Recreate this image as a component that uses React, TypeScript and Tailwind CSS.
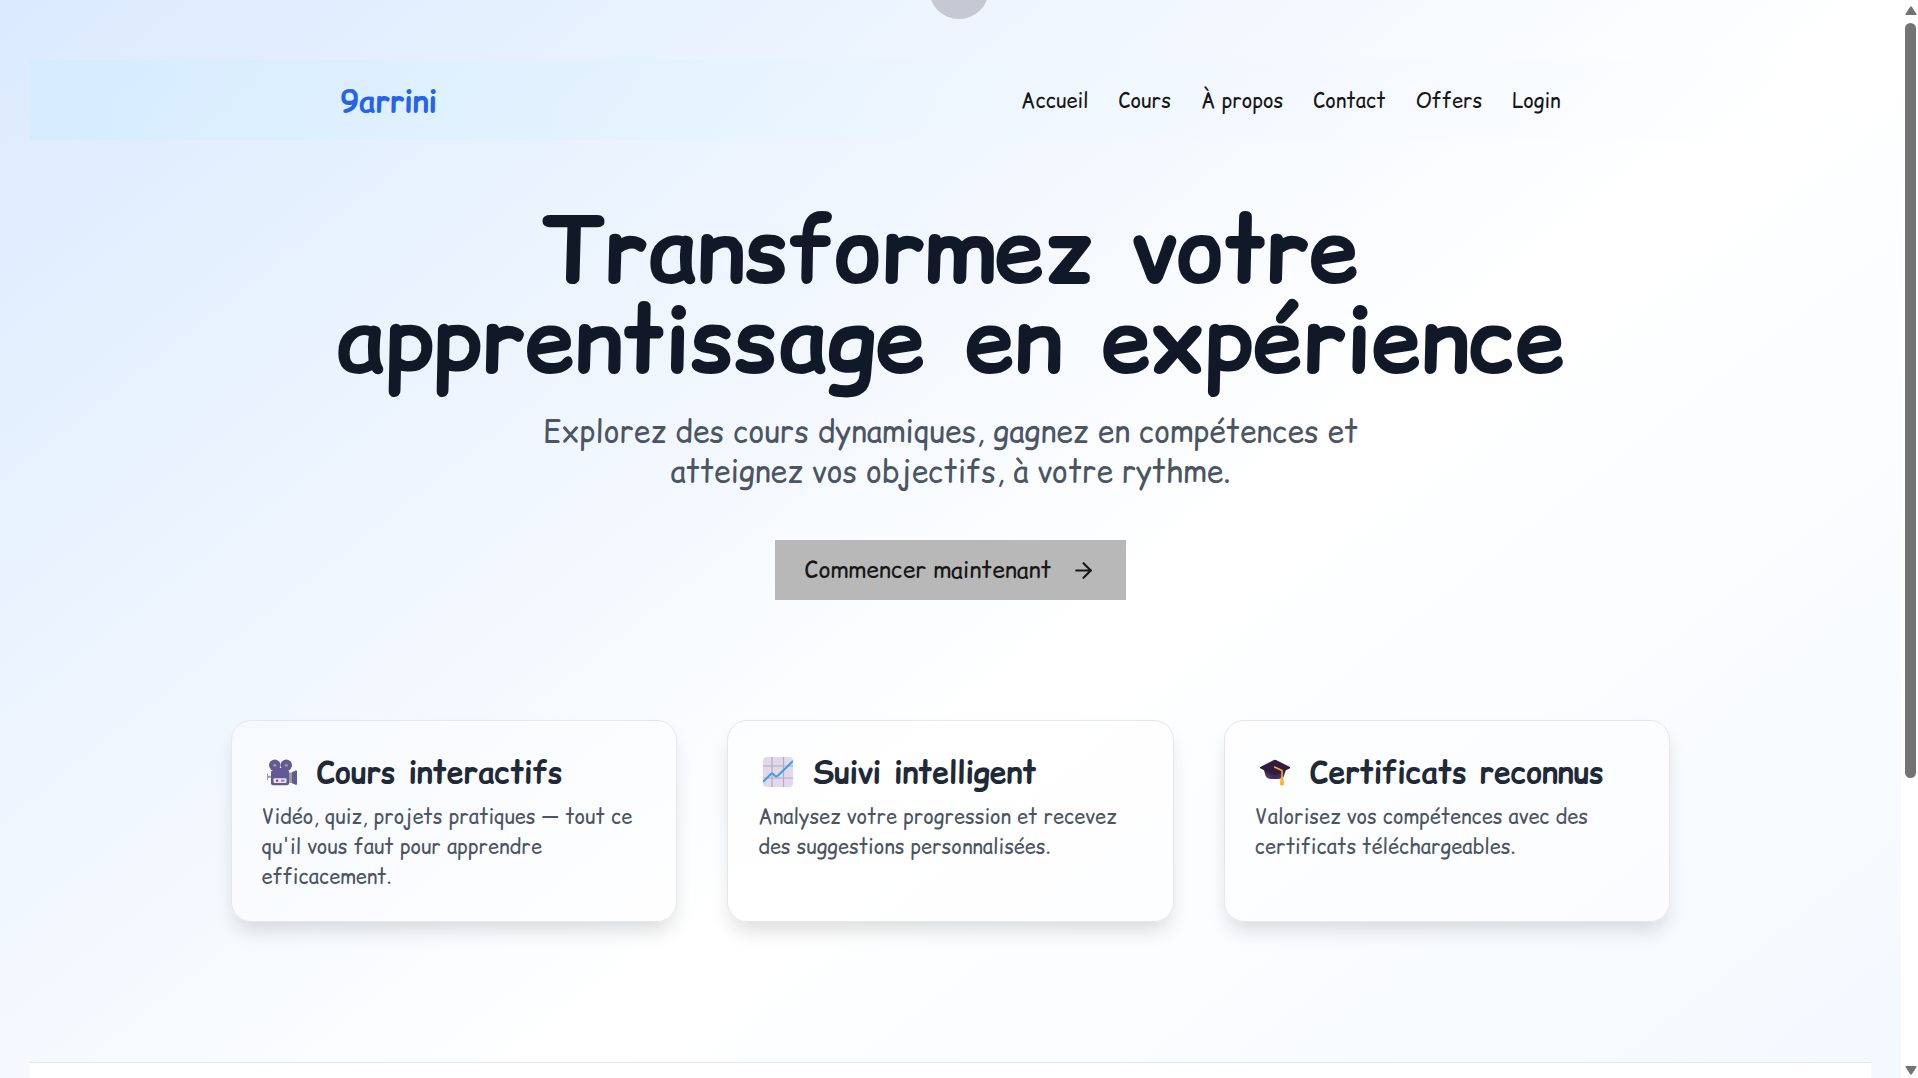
import type { ReactNode } from 'react'
import { ArrowRight } from 'lucide-react'

const links = ['Accueil', 'Cours', 'À propos', 'Contact', 'Offers', 'Login']

function CameraIcon() {
  return (
    <svg viewBox="0 -1 30 30" className="size-[30px] shrink-0" aria-hidden="true">
      <path d="M0 15.5h1v2.300h3.500v2H1V22H0z" fill="#9b9b9b" />
      <rect x="21.500" y="14.500" width="4" height="10.500" fill="#9b9b9b" />
      <circle cx="7.800" cy="7.200" r="5.700" fill="#635994" />
      <circle cx="19.300" cy="7.200" r="5.700" fill="#635994" />
      <path d="M10 10h8l4 3v12.200a2 2 0 0 1-2 2H6a2 2 0 0 1-2-2V13.500z" fill="#635994" />
      <circle cx="7.800" cy="7.200" r="1.500" fill="#9b9b9b" />
      <circle cx="19.300" cy="7.200" r="1.500" fill="#9b9b9b" />
      <path d="M25 14.200l3.600-1.600q1.400-.5 1.400 1v12q0 1.600-1.400 1.200L25 25.300z" fill="#635994" />
      <rect x="6.500" y="20.300" width="13" height="4.700" rx="1" fill="#e6e6e6" />
      <rect x="9" y="21.700" width="2.200" height="2" fill="#e3175a" />
      <rect x="14" y="21.700" width="3.500" height="2" fill="#8b83b8" />
    </svg>
  )
}

function ChartIcon() {
  return (
    <svg viewBox="0 0 30 30" className="size-[30px] shrink-0" aria-hidden="true">
      <rect width="30" height="30" rx="4" fill="#e1d8ec" />
      <path d="M9 0v30M20.500 0v30M0 9h30M0 21h30" stroke="#b4acbc" strokeWidth="1.200" />
      <path
        d="M0 25l7.800-8q1.200-1 2.400 0l1.600 1.700q1.500 1.200 3 0L30 4"
        fill="none"
        stroke="#3a9ff0"
        strokeWidth="2"
      />
    </svg>
  )
}

function CapIcon() {
  return (
    <svg viewBox="0 0 30 30" className="size-[30px] shrink-0" aria-hidden="true">
      <path d="M4 11h21.500l-1 6.500q-1 4.500-6 4.500h-7Q6 22 5 17z" fill="#533566" />
      <path d="M4 12.500l11 6.800 11-6.800-1 3.500-10 6-10-6z" fill="#402a52" />
      <path d="M14 3q1-.6 2 0l14 7q.6.600 0 1.200l-14 7q-1 .5-2 0L.2 11.200q-.6-.6 0-1.200z" fill="#321b41" />
      <path d="M14.500 10l7.500 3.500V22" fill="none" stroke="#ffb02e" strokeWidth="1.500" strokeLinecap="round" strokeLinejoin="round" />
      <path d="M20.600 20.500h2.800l.600 7q0 1-2 1t-2-1z" fill="#ffb02e" />
    </svg>
  )
}

function FeatureCard({ icon, title, children }: { icon: ReactNode; title: string; children: ReactNode }) {
  return (
    <article className="rounded-[20px] border border-[#e5e7eb] bg-white/40 px-[30px] pt-[31px] pb-[29px] shadow-[0_12px_20px_-4px_rgba(0,0,0,0.14)]">
      <h3 className="mb-[10px] flex items-center gap-5 pl-[5px] text-[30px] leading-[40px] font-bold text-[#1f2937]">
        {icon}
        {title}
      </h3>
      <p className="text-[20px] leading-[30px] text-[#4b5563]">{children}</p>
    </article>
  )
}

export default function App() {
  return (
    <div className="flex h-screen overflow-hidden bg-white font-['Comic_Relief','Comic_Neue','Open_Sans',sans-serif] text-[#171717]">
      <div className="relative min-w-0 flex-1 overflow-hidden">
        <div className="min-h-[1497px] bg-[linear-gradient(to_bottom_right,#dbeafe,#ffffff,#eff6ff)] p-[30px]">
          <header className="mt-[30px] bg-[linear-gradient(to_right,#cdedff80,#eaf7ff40,#ffffff00)]">
            <div className="mx-auto flex h-[80px] max-w-[1280px] items-center justify-between px-[30px] pt-0.5">
              <a href="#" className="text-[30px] leading-[40px] font-bold text-[#2563eb]">
                9arrini
              </a>
              <nav className="flex gap-[30px] text-[20px] leading-[30px]">
                {links.map((label) => (
                  <a key={label} href="#">
                    {label}
                  </a>
                ))}
              </nav>
            </div>
          </header>

          <main>
            <section className="mx-auto flex max-w-[1280px] flex-col items-center pt-[65px] text-center">
              <h1 className="mb-[26px] text-[90px] leading-[90px] font-bold text-[#111827]">
                Transformez votre apprentissage en expérience
              </h1>
              <p className="mb-[49px] max-w-[840px] text-[30px] leading-[40px] text-[#4b5563]">
                Explorez des cours dynamiques, gagnez en compétences et atteignez vos objectifs, à votre rythme.
              </p>
              <button
                type="button"
                className="flex h-[60px] items-center gap-5 bg-[#b8b8b8] px-[30px] text-[23px] leading-[30px]"
              >
                Commencer maintenant
                <ArrowRight size={25} />
              </button>
            </section>

            <section className="mx-auto mt-[120px] mb-[140px] grid max-w-[1440px] grid-cols-3 gap-[50px]">
              <FeatureCard icon={<CameraIcon />} title="Cours interactifs">
                Vidéo, quiz, projets pratiques — tout ce qu'il vous faut pour apprendre efficacement.
              </FeatureCard>
              <FeatureCard icon={<ChartIcon />} title="Suivi intelligent">
                Analysez votre progression et recevez des suggestions personnalisées.
              </FeatureCard>
              <FeatureCard icon={<CapIcon />} title="Certificats reconnus">
                Valorisez vos compétences avec des certificats téléchargeables.
              </FeatureCard>
            </section>
          </main>

          <footer className="h-[405px] border-t border-[#e5e7eb] bg-white" />
        </div>
      </div>

      <aside className="flex w-[17px] flex-col items-center bg-white pt-[6px] pb-[3px] pl-[2px]" aria-hidden="true">
        <svg viewBox="0 0 12 9" className="h-[9px] w-3 shrink-0">
          <path d="M1 9h10q1 0 .5-1L7 1Q6-.5 5 1L.5 8Q0 9 1 9z" fill="#737373" />
        </svg>
        <div className="mt-2 h-[755px] w-[11px] shrink-0 rounded-full bg-[#737373]" />
        <svg viewBox="0 0 12 9" className="mt-auto h-[9px] w-3 shrink-0">
          <path d="M1 0h10q1 0 .5 1L7 8Q6 9.500 5 8L.5 1Q0 0 1 0z" fill="#737373" />
        </svg>
      </aside>

      <div className="absolute top-[-41px] left-1/2 size-[60px] -translate-x-1/2 rounded-full bg-[#c4c9d3]" />
    </div>
  )
}
